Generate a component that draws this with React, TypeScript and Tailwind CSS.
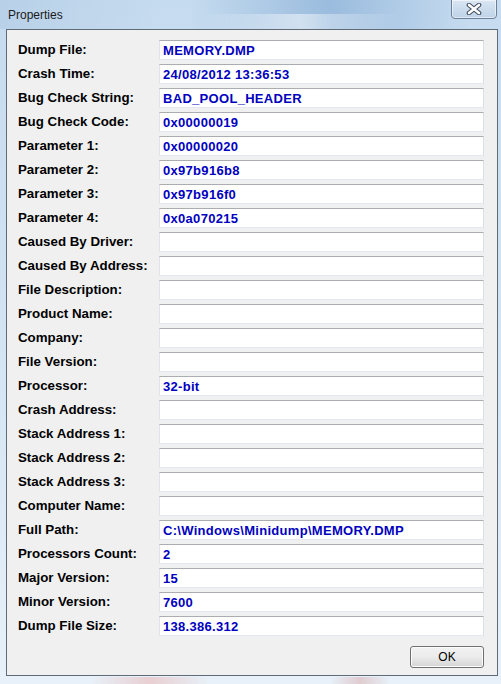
import React from 'react'

const rows: [string, string][] = [
    ['Dump File:', 'MEMORY.DMP'],
    ['Crash Time:', '24/08/2012 13:36:53'],
    ['Bug Check String:', 'BAD_POOL_HEADER'],
    ['Bug Check Code:', '0x00000019'],
    ['Parameter 1:', '0x00000020'],
    ['Parameter 2:', '0x97b916b8'],
    ['Parameter 3:', '0x97b916f0'],
    ['Parameter 4:', '0x0a070215'],
    ['Caused By Driver:', ''],
    ['Caused By Address:', ''],
    ['File Description:', ''],
    ['Product Name:', ''],
    ['Company:', ''],
    ['File Version:', ''],
    ['Processor:', '32-bit'],
    ['Crash Address:', ''],
    ['Stack Address 1:', ''],
    ['Stack Address 2:', ''],
    ['Stack Address 3:', ''],
    ['Computer Name:', ''],
    ['Full Path:', 'C:\\Windows\\Minidump\\MEMORY.DMP'],
    ['Processors Count:', '2'],
    ['Major Version:', '15'],
    ['Minor Version:', '7600'],
    ['Dump File Size:', '138.386.312'],
]

function CloseButton() {
    return (
        <div className="absolute top-[-1px] right-[4px] w-[46px] h-[20px] rounded-b-[4px] border border-[#6d7f96] bg-gradient-to-b from-[#dfe9f4]/80 to-[#bcd0e6]/80 flex items-center justify-center shadow-[inset_0_0_0_1px_rgba(255,255,255,0.55)]">
            <svg width="16" height="12" viewBox="0 0 16 12">
                <path d="M3 2 L13 10 M13 2 L3 10" stroke="#3f4a5a" strokeWidth="4.6" strokeLinecap="round" />
                <path d="M3 2 L13 10 M13 2 L3 10" stroke="#ffffff" strokeWidth="2.6" strokeLinecap="round" />
            </svg>
        </div>
    )
}

export default function App() {
    return (
        <div className="relative w-[501px] h-[684px] overflow-hidden bg-gradient-to-b from-[#c5dbef] via-[#d3e4f3] to-[#e8f1f9] font-['Liberation_Sans',Arial,sans-serif]">
            {/* aero glass streaks */}
            <div className="absolute left-[190px] top-0 w-[280px] h-[29px] bg-gradient-to-r from-transparent via-[#7ea7d2]/60 to-transparent"></div>
            <div className="absolute left-[200px] top-[14px] w-[200px] h-[15px] bg-gradient-to-r from-transparent via-white/50 to-transparent"></div>
            <div className="absolute left-0 top-0 w-[160px] h-[29px] bg-gradient-to-r from-[#b0cae3]/60 to-transparent"></div>

            {/* title bar */}
            <div className="relative h-[29px] flex items-center pl-[8px]">
                <span className="text-[12px] text-[#1b1b1b] leading-none">Properties</span>
                <CloseButton />
            </div>

            {/* client area */}
            <div className="relative ml-[6px] mr-[3px] h-[647px] border border-[#5f6b77] bg-[#f0f0f0] pt-[10px] pl-[11px] pr-[13px]">
                <div className="flex flex-col gap-[4px]">
                    {rows.map(([label, value]) => (
                        <div key={label} className="flex items-center h-[20px]">
                            <div className="w-[141px] text-[13.3px] font-bold text-black leading-none whitespace-nowrap">{label}</div>
                            <div className="flex-1 h-[20px] bg-white border border-t-[#abadb3] border-l-[#e2e3ea] border-r-[#dbdfe6] border-b-[#e3e9ef] flex items-center pl-[3px]">
                                <span className="text-[13px] font-bold text-[#0000c0] leading-none tracking-[0.3px] whitespace-nowrap">{value}</span>
                            </div>
                        </div>
                    ))}
                </div>
                <div className="flex justify-end mt-[10px]">
                    <button className="w-[74px] h-[22px] rounded-[3px] border border-[#707070] bg-gradient-to-b from-[#f2f2f2] via-[#ebebeb] to-[#d4d4d4] shadow-[inset_0_0_0_1px_#fcfcfc] text-[12px] text-black leading-none flex items-center justify-center">
                        OK
                    </button>
                </div>
            </div>

            {/* bottom frame blur */}
            <div className="absolute left-[90px] bottom-0 w-[120px] h-[7px] bg-gradient-to-r from-transparent via-[#e8b8b8]/60 to-transparent"></div>
            <div className="absolute left-[330px] bottom-0 w-[60px] h-[7px] bg-gradient-to-r from-transparent via-[#d6a8a8]/50 to-transparent"></div>
        </div>
    )
}
